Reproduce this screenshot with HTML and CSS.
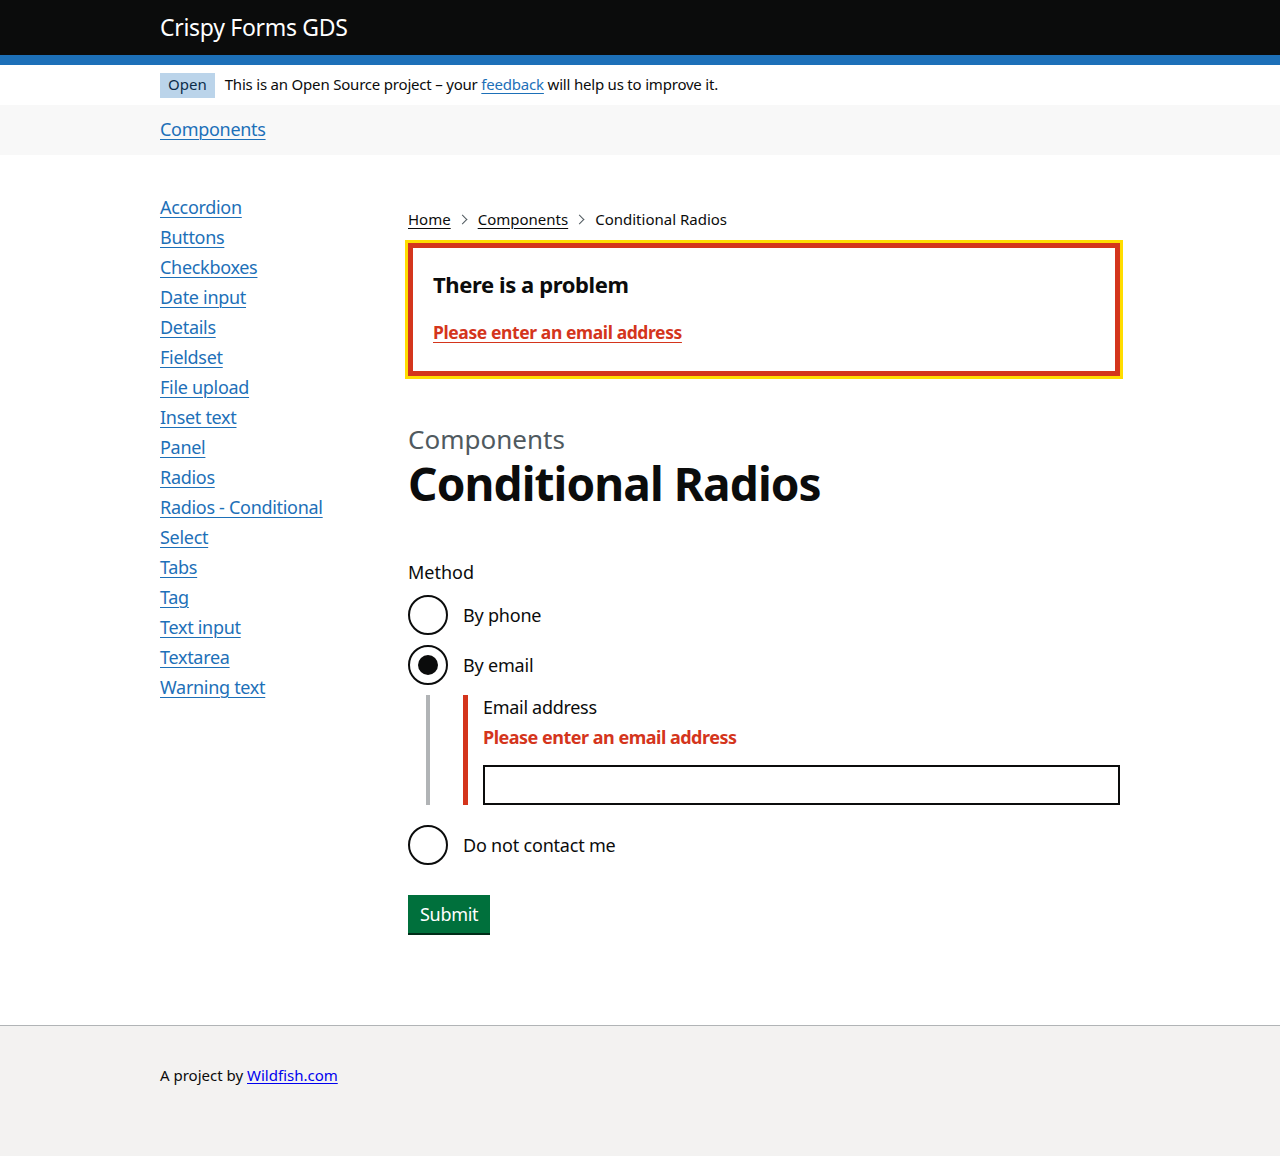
FILE: index.html
```html
<!DOCTYPE html>
<html lang="en">
<head>
<meta charset="utf-8">
<title>Conditional Radios</title>
<link rel="stylesheet" href="styles.css">
</head>
<body>
<header class="header">
  <div class="container header-inner">
    <a class="header-title" href="#">Crispy Forms GDS</a>
  </div>
</header>
<div class="container phase-banner">
  <strong class="tag">Open</strong>
  <span class="phase-text">This is an Open Source project – your <a href="#" class="link">feedback</a> will help us to improve it.</span>
</div>
<nav class="topnav">
  <div class="container">
    <a href="#" class="link topnav-link">Components</a>
  </div>
</nav>
<div class="container main">
  <aside class="sidebar">
    <ul class="side-list">
      <li><a href="#" class="link">Accordion</a></li>
      <li><a href="#" class="link">Buttons</a></li>
      <li><a href="#" class="link">Checkboxes</a></li>
      <li><a href="#" class="link">Date input</a></li>
      <li><a href="#" class="link">Details</a></li>
      <li><a href="#" class="link">Fieldset</a></li>
      <li><a href="#" class="link">File upload</a></li>
      <li><a href="#" class="link">Inset text</a></li>
      <li><a href="#" class="link">Panel</a></li>
      <li><a href="#" class="link">Radios</a></li>
      <li><a href="#" class="link">Radios - Conditional</a></li>
      <li><a href="#" class="link">Select</a></li>
      <li><a href="#" class="link">Tabs</a></li>
      <li><a href="#" class="link">Tag</a></li>
      <li><a href="#" class="link">Text input</a></li>
      <li><a href="#" class="link">Textarea</a></li>
      <li><a href="#" class="link">Warning text</a></li>
    </ul>
  </aside>
  <main class="content">
    <ol class="breadcrumbs">
      <li><a href="#" class="crumb-link">Home</a></li>
      <li class="crumb-sep"><a href="#" class="crumb-link">Components</a></li>
      <li class="crumb-sep">Conditional Radios</li>
    </ol>
    <div class="error-summary">
      <h2 class="error-title">There is a problem</h2>
      <a href="#" class="error-link">Please enter an email address</a>
    </div>
    <span class="caption">Components</span>
    <h1 class="title">Conditional Radios</h1>
    <form class="form">
      <fieldset class="fieldset">
        <legend class="legend">Method</legend>
        <div class="radios">
          <label class="radio">
            <span class="radio-circle"></span>
            <span class="radio-label">By phone</span>
          </label>
          <label class="radio">
            <span class="radio-circle checked"></span>
            <span class="radio-label">By email</span>
          </label>
          <div class="conditional">
            <div class="form-group-error">
              <div class="field-label">Email address</div>
              <div class="error-message">Please enter an email address</div>
              <input class="input" type="text" aria-label="Email address">
            </div>
          </div>
          <label class="radio">
            <span class="radio-circle"></span>
            <span class="radio-label">Do not contact me</span>
          </label>
        </div>
      </fieldset>
      <button type="button" class="button">Submit</button>
    </form>
  </main>
</div>
<footer class="footer">
  <div class="container">
    <p class="footer-text">A project by <a href="#" class="footer-link">Wildfish.com</a></p>
  </div>
</footer>
</body>
</html>
```

FILE: styles.css
```css
* { box-sizing: border-box; }
html, body { margin: 0; padding: 0; }
body {
  font-family: "Noto Sans", "Liberation Sans", sans-serif;
  color: #0b0c0c;
  background: #fff;
  -webkit-font-smoothing: antialiased;
}
.container { width: 960px; margin: 0 auto; }
.link { color: #1d70b8; text-decoration: underline; text-underline-offset: 3px; text-decoration-thickness: 1px; }

.header { background: #0b0c0c; border-bottom: 10px solid #1d70b8; }
.header-inner { height: 55px; display: flex; align-items: center; }
.header-title { color: #fff; text-decoration: none; font-size: 23px; line-height: 1; padding-bottom: 1px; letter-spacing: -0.3px; }

.phase-banner { height: 40px; display: flex; align-items: center; font-size: 15px; }
.tag { background: #bbd4ea; color: #0c2d4a; font-weight: 400; font-size: 15px; padding: 2px 8px 4px; height: 25px; line-height: 19px; margin-right: 10px; }
.phase-text { letter-spacing: -0.2px; margin-top: -2px; }

.topnav { background: #f8f8f8; }
.topnav .container { height: 50px; display: flex; align-items: center; }
.topnav-link { font-size: 18px; letter-spacing: -0.3px; margin-top: -2px; }

.main { display: grid; grid-template-columns: 248px 1fr; padding-top: 40px; padding-bottom: 92px; }
.side-list { list-style: none; margin: 0; padding: 0; }
.side-list li { height: 30px; line-height: 25px; font-size: 18px; letter-spacing: -0.3px; }

.content { padding-top: 14px; }
.breadcrumbs { list-style: none; margin: 0; padding: 0; display: flex; font-size: 15px; line-height: 20px; height: 20px; }
.breadcrumbs li { display: flex; align-items: center; }
.crumb-link { color: #0b0c0c; text-decoration: underline; text-underline-offset: 3px; }
.crumb-sep::before {
  content: "";
  width: 6px; height: 6px;
  border-top: 1px solid #505a5f; border-right: 1px solid #505a5f;
  transform: rotate(45deg);
  margin: 0 12px 0 8px;
}

.error-summary {
  margin-top: 14px;
  border: 5px solid #d4351c;
  outline: 3px solid #ffdd00;
  padding: 21px 20px 20px;
  height: 133px;
}
.error-title { margin: 0; font-size: 22px; font-weight: 700; line-height: 30px; letter-spacing: -0.4px; }
.error-link { display: inline-block; margin-top: 23px; color: #d4351c; font-weight: 700; font-size: 17.5px; line-height: 20px; text-decoration: underline; text-underline-offset: 3px; letter-spacing: -0.4px; }

.caption { display: block; margin-top: 48px; color: #505a5f; font-size: 26px; line-height: 30px; }
.title { margin: 4px 0 0; font-size: 46px; font-weight: 700; line-height: 50px; letter-spacing: -0.9px; }

.form { margin-top: 52px; }
.fieldset { border: 0; margin: 0; padding: 0; min-width: 0; }
.legend { padding: 0; font-size: 18px; line-height: 25px; margin-bottom: 10px; }
.radios { display: flex; flex-direction: column; }
.radio { display: flex; align-items: center; height: 40px; margin-bottom: 10px; cursor: pointer; }
.radio-circle {
  width: 40px; height: 40px; border: 2px solid #0b0c0c; border-radius: 50%;
  display: flex; align-items: center; justify-content: center; flex: none;
}
.radio-circle.checked::after { content: ""; width: 20px; height: 20px; border-radius: 50%; background: #0b0c0c; }
.radio-label { margin-left: 15px; font-size: 18px; letter-spacing: -0.2px; }

.conditional { margin-left: 18px; border-left: 4px solid #b1b4b6; padding-left: 33px; margin-bottom: 20px; }
.form-group-error { border-left: 5px solid #d4351c; padding-left: 15px; }
.field-label { font-size: 18px; line-height: 25px; letter-spacing: -0.3px; }
.error-message { color: #d4351c; font-weight: 700; font-size: 18px; line-height: 25px; margin-top: 5px; letter-spacing: -0.5px; }
.input { display: block; width: 100%; height: 40px; margin-top: 15px; border: 2px solid #0b0c0c; border-radius: 0; font: inherit; padding: 5px; }

.button {
  margin-top: 20px;
  background: #00703c; color: #fff; border: 0; border-radius: 0;
  box-shadow: 0 2px 0 #002d18;
  font-family: inherit; font-size: 18px; line-height: 20px; letter-spacing: -0.3px;
  padding: 9px 12px 9px; height: 38px;
}

.footer { background: #f3f2f1; border-top: 1px solid #b1b4b6; height: 131px; }
.footer-text { margin: 0; padding-top: 39px; font-size: 15px; line-height: 20px; }
.footer-link { color: #0000ee; text-decoration: underline; text-underline-offset: 2px; }
```
